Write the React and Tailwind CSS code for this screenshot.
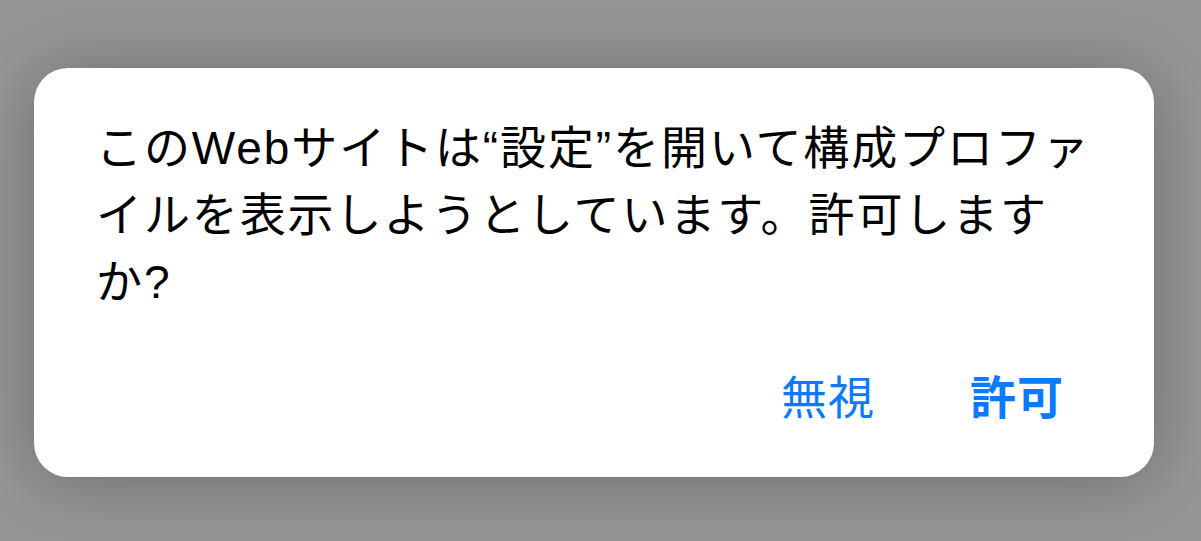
import React from "react";

export default function App() {
  return (
    <div className="w-[1201px] h-[541px] bg-[#969696] overflow-hidden pt-[68px] pl-[34px]">
      <div
        className="w-[1120px] h-[409px] bg-white rounded-[34px] shadow-[0_4px_70px_rgba(0,0,0,0.28)] flex flex-col pt-[47px] pl-[62px] pr-[60px]"
        style={{ fontFamily: '"Liberation Sans", "Noto Sans CJK JP", sans-serif' }}
      >
        <p className="text-[46px] leading-[67px] tracking-[1.9px] text-black">
          このWebサイトは“設定”を開いて構成プロファイルを表示しようとしています。許可しますか?
        </p>
        <div className="mt-auto mb-[56px] flex justify-end items-center gap-[95px] pr-[30px] text-[46px] leading-[46px] text-[#0a7aff]">
          <button className="tracking-[1px]">無視</button>
          <button className="font-bold tracking-[1px]">許可</button>
        </div>
      </div>
    </div>
  );
}
